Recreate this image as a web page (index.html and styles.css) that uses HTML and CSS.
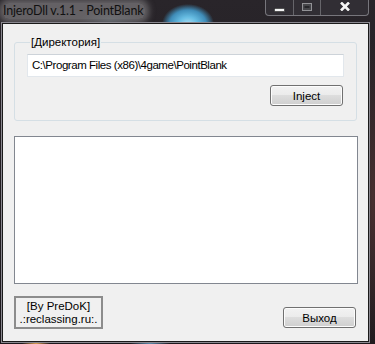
FILE: index.html
```html
<!DOCTYPE html>
<html>
    <head>
        <title>InjeroDll v.1.1 - PointBlank</title>
        <link rel="stylesheet" href="styles.css">
    </head>
    <body>
        <div class="window">
            <div class="titlebar">
                <span class="title">InjeroDll v.1.1 - PointBlank</span>
                <div class="caption-buttons">
                    <div class="caption min">
                        <svg width="11" height="4" viewBox="0 0 11 4"><rect x="0.5" y="0.5" width="10" height="3" fill="#f4f4f4" stroke="#2a2a2a" stroke-width="0.6"/></svg>
                    </div>
                    <div class="caption max">
                        <svg width="10" height="8" viewBox="0 0 10 8"><rect x="0.5" y="0.5" width="9" height="7" fill="#46464a" stroke="#929296"/><rect x="2.5" y="3" width="5" height="2" fill="#26262a"/></svg>
                    </div>
                    <div class="caption close">
                        <svg width="10" height="9" viewBox="0 0 10 9"><path d="M1 0.5 L9 8.5 M9 0.5 L1 8.5" stroke="#f6f6f6" stroke-width="2.6"/></svg>
                    </div>
                </div>
            </div>

            <div class="client">
                <fieldset class="group">
                    <legend>[Директория]</legend>
                    <div class="textbox">C:\Program Files (x86)\4game\PointBlank</div>
                    <div class="row-right">
                        <button class="button inject">Inject</button>
                    </div>
                </fieldset>

                <div class="memo"></div>

                <div class="bottom-row">
                    <div class="credit">
                        <span>[By PreDoK]</span>
                        <span>.:reclassing.ru:.</span>
                    </div>
                    <button class="button exit">Выход</button>
                </div>
            </div>
        </div>
    </body>
</html>
```

FILE: styles.css
```css
body {
    margin: 0;
    background: #1e1a1f;
}

.window {
    width: 375px;
    height: 344px;
    display: flex;
    flex-direction: column;
    background:
        radial-gradient(ellipse 26px 20px at 188px 24px, #a8dcf2 0%, #66bce2 35%, #3f8cb8 70%, rgba(50, 100, 140, 0) 100%),
        radial-gradient(ellipse 30px 12px at 110px 20px, rgba(90, 110, 120, 0.45), rgba(0, 0, 0, 0)),
        radial-gradient(ellipse 14px 6px at 36px 344px, #e0a050, rgba(0, 0, 0, 0)),
        radial-gradient(ellipse 20px 6px at 150px 344px, #5a8cb0, rgba(0, 0, 0, 0)),
        radial-gradient(ellipse 10px 160px at 373px 200px, #4a3030, rgba(0, 0, 0, 0)),
        linear-gradient(#29252a, #1c181c);
}

.titlebar {
    height: 23px;
    display: flex;
    justify-content: space-between;
    align-items: flex-start;
}

.title {
    margin: 3px 0 0 3px;
    padding: 0 2px 0 0;
    font-family: Lato, sans-serif;
    font-size: 12.5px;
    letter-spacing: -0.2px;
    line-height: 16px;
    color: #111;
    background: rgba(150, 148, 150, 0.55);
    box-shadow: 0 0 6px 4px rgba(150, 148, 150, 0.55);
    border-radius: 6px;
}

.caption-buttons {
    display: flex;
    height: 15px;
    margin-right: 6px;
    border: 1px solid #77767c;
    border-top: 0;
    border-radius: 0 0 4px 4px;
    background: rgba(50, 48, 54, 0.85);
}

.caption {
    display: flex;
    align-items: center;
    justify-content: center;
}

.caption + .caption {
    border-left: 1px solid #66656a;
}

.min {
    width: 27px;
}

.min svg {
    margin-top: 5px;
}

.max {
    width: 26px;
}

.max svg {
    margin-top: -2px;
}

.close {
    width: 47px;
}

.close svg {
    margin-top: -3px;
}

.client {
    flex: 1;
    margin: 0 6px 2px 2px;
    border: 1px solid #1a1a1a;
    box-shadow: 0 0 0 1px #8a8890;
    background: #f0f0f0;
    display: flex;
    flex-direction: column;
    padding: 12px 0 0 11px;
    font-family: "Liberation Sans", Arial, sans-serif;
    font-size: 11px;
    color: #000;
}

.group {
    width: 343px;
    margin: 0;
    padding: 5px 12px 13px 12px;
    border: 1px solid #d5dfe5;
    border-radius: 3px;
    box-sizing: border-box;
    display: flex;
    flex-direction: column;
    height: 85px;
}

.group legend {
    margin-left: 3px;
    padding: 0 1px;
    line-height: 13px;
    font-size: 11.5px;
}

.textbox {
    height: 23px;
    box-sizing: border-box;
    border: 1px solid #e2e7ec;
    border-top-color: #cdd3d9;
    background: #fff;
    padding: 0 0 0 4px;
    line-height: 21px;
    font-size: 11.5px;
    letter-spacing: -0.45px;
    white-space: nowrap;
}

.row-right {
    display: flex;
    justify-content: flex-end;
    margin-top: 8px;
}

.button {
    width: 73px;
    height: 21px;
    padding: 0;
    border: 1px solid #707070;
    border-radius: 3px;
    box-shadow: inset 0 0 0 1px #fcfcfc;
    background: linear-gradient(#f2f2f2 0%, #ebebeb 50%, #dddddd 50%, #cfcfcf 100%);
    font-family: "Liberation Sans", Arial, sans-serif;
    font-size: 11.5px;
    color: #000;
}

.inject {
    margin-right: 1px;
}

.memo {
    width: 344px;
    height: 148px;
    box-sizing: border-box;
    margin-top: 15px;
    border: 1px solid #828790;
    background: #fff;
}

.bottom-row {
    display: flex;
    justify-content: space-between;
    align-items: flex-start;
    width: 342px;
    margin-top: 12px;
}

.credit {
    width: 89px;
    height: 33px;
    box-sizing: border-box;
    border: 2px solid #8c8c8c;
    display: flex;
    flex-direction: column;
    align-items: center;
    justify-content: center;
    line-height: 13px;
    font-size: 11.5px;
}

.exit {
    margin-top: 11px;
}
```
